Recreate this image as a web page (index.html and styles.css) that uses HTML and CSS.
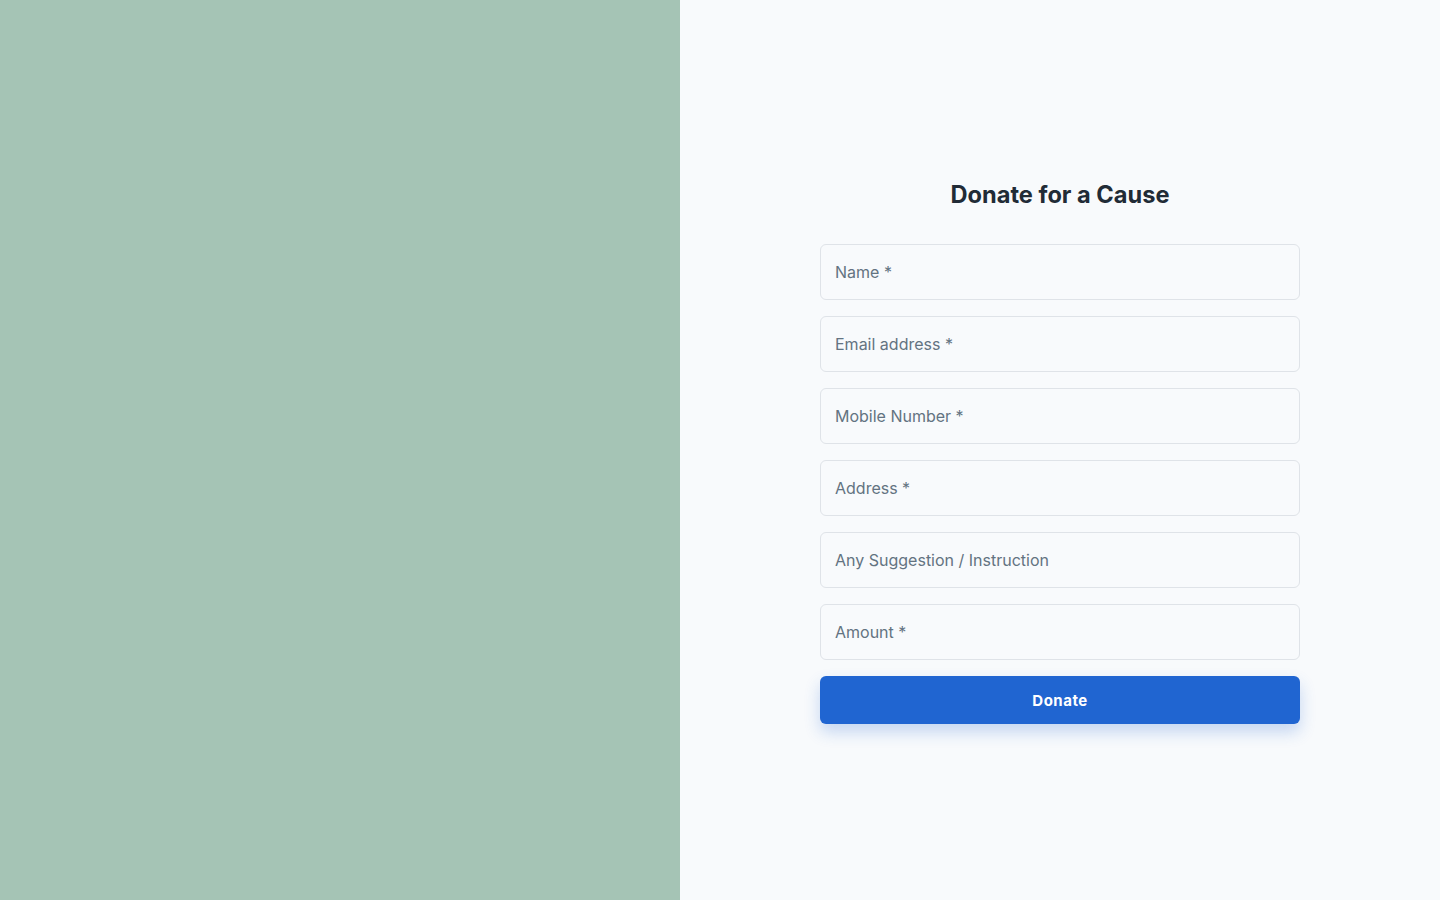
FILE: index.html
```html
<!DOCTYPE html>
<html lang="en">
<head>
<meta charset="utf-8">
<title>Donate for a Cause</title>
<link rel="stylesheet" href="styles.css">
</head>
<body>
<div class="page">
  <aside class="side"></aside>
  <main class="main">
    <form class="form">
      <h1 class="title">Donate for a Cause</h1>
      <input class="field" type="text" placeholder="Name *">
      <input class="field" type="email" placeholder="Email address *">
      <input class="field" type="text" placeholder="Mobile Number *">
      <input class="field" type="text" placeholder="Address *">
      <input class="field" type="text" placeholder="Any Suggestion / Instruction">
      <input class="field" type="text" placeholder="Amount *">
      <button class="btn" type="button">Donate</button>
    </form>
  </main>
</div>
</body>
</html>
```
FILE: styles.css
```css
* { box-sizing: border-box; }
html, body { margin: 0; padding: 0; height: 100%; }
body {
  font-family: "Inter", "Noto Sans", sans-serif;
  background: #f8fafc;
}
.page {
  display: flex;
  height: 900px;
}
.side {
  width: 680px;
  flex: none;
  background: #a5c4b5;
}
.main {
  flex: 1;
  display: flex;
  align-items: center;
  justify-content: center;
  background: #f8fafc;
}
.form {
  width: 480px;
  display: flex;
  flex-direction: column;
  gap: 16px;
}
.title {
  margin: 0 0 16px;
  text-align: center;
  font-size: 23.6px;
  line-height: 34px;
  padding-top: 2px;
  font-weight: 700;
  color: #212b36;
}
.field {
  height: 56px;
  padding: 0 14px;
  border: 1px solid #dfe3e8;
  border-radius: 6px;
  background: #f8fafc;
  font-family: inherit;
  font-size: 16px;
  color: #212b36;
  outline: none;
}
.field::placeholder { color: #637381; }
.btn {
  height: 48px;
  border: 0;
  border-radius: 6px;
  background: #2065d1;
  color: #fff;
  font-family: inherit;
  font-size: 15px;
  font-weight: 700;
  letter-spacing: 0.5px;
  box-shadow: 0 8px 16px rgba(32, 101, 209, 0.24);
  cursor: pointer;
}
```
